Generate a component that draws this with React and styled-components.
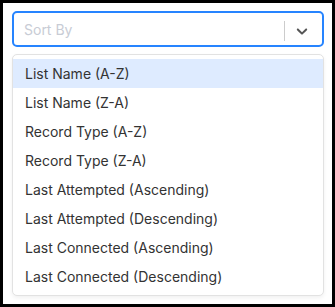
import React, { useState } from "react";
import styled, { createGlobalStyle } from "styled-components";

const GlobalStyle = createGlobalStyle`
  html, body {
    margin: 0;
    padding: 0;
    background: #000;
  }
  body {
    font-family: Inter, "Noto Sans", "Liberation Sans", sans-serif;
  }
`;

const options = [
  "List Name (A-Z)",
  "List Name (Z-A)",
  "Record Type (A-Z)",
  "Record Type (Z-A)",
  "Last Attempted (Ascending)",
  "Last Attempted (Descending)",
  "Last Connected (Ascending)",
  "Last Connected (Descending)",
];

const Chevron = () => (
  <svg width="18" height="18" viewBox="0 0 20 20" aria-hidden="true">
    <path
      fill="#555"
      d="M4.516 7.548c0.436-0.446 1.043-0.481 1.576 0l3.908 3.747 3.908-3.747c0.533-0.481 1.141-0.446 1.574 0 0.436 0.445 0.408 1.197 0 1.615-0.406 0.418-4.695 4.502-4.695 4.502-0.217 0.223-0.502 0.335-0.787 0.335s-0.57-0.112-0.789-0.335c0 0-4.287-4.084-4.695-4.502s-0.436-1.17 0-1.615z"
    />
  </svg>
);

const App = () => {
  const [focused, setFocused] = useState(0);

  return (
    <>
      <GlobalStyle />
      <Frame>
        <Control>
          <Placeholder>Sort By</Placeholder>
          <Indicators>
            <Separator />
            <IndicatorBox>
              <Chevron />
            </IndicatorBox>
          </Indicators>
        </Control>
        <Menu>
          {options.map((opt, i) => (
            <Option key={opt} active={i === focused} onMouseEnter={() => setFocused(i)}>
              {opt}
            </Option>
          ))}
        </Menu>
      </Frame>
    </>
  );
};

export default App;

const Frame = styled.div`
  margin: 3px;
  width: 329px;
  height: 301px;
  background: #fff;
  box-sizing: border-box;
  padding: 8px 0 0 9px;
`;

const Control = styled.div`
  width: 312px;
  height: 36px;
  box-sizing: border-box;
  border: 2px solid #2684ff;
  border-radius: 5px;
  display: flex;
  align-items: center;
  justify-content: space-between;
  padding-left: 10px;
`;

const Placeholder = styled.span`
  font-size: 14px;
  color: #c8ccd5;
  margin-top: 1px;
`;

const Indicators = styled.div`
  display: flex;
  align-items: center;
  height: 100%;
  padding-top: 3px;
  box-sizing: border-box;
`;

const Separator = styled.span`
  width: 1px;
  height: 20px;
  background: #ccc;
`;

const IndicatorBox = styled.div`
  display: flex;
  align-items: center;
  padding: 0 11px 0 8px;
`;

const Menu = styled.div`
  margin-top: 7px;
  width: 312px;
  box-sizing: border-box;
  border: 1px solid #e2e2e2;
  border-radius: 5px;
  padding: 4px 0;
  background: #fff;
  box-shadow: 0 2px 4px rgba(0, 0, 0, 0.06);
`;

const Option = styled.div`
  height: 29px;
  line-height: 29px;
  padding: 0 12px;
  font-size: 14px;
  color: #333;
  background: ${(props) => (props.active ? "#deebff" : "transparent")};
  cursor: default;
`;
